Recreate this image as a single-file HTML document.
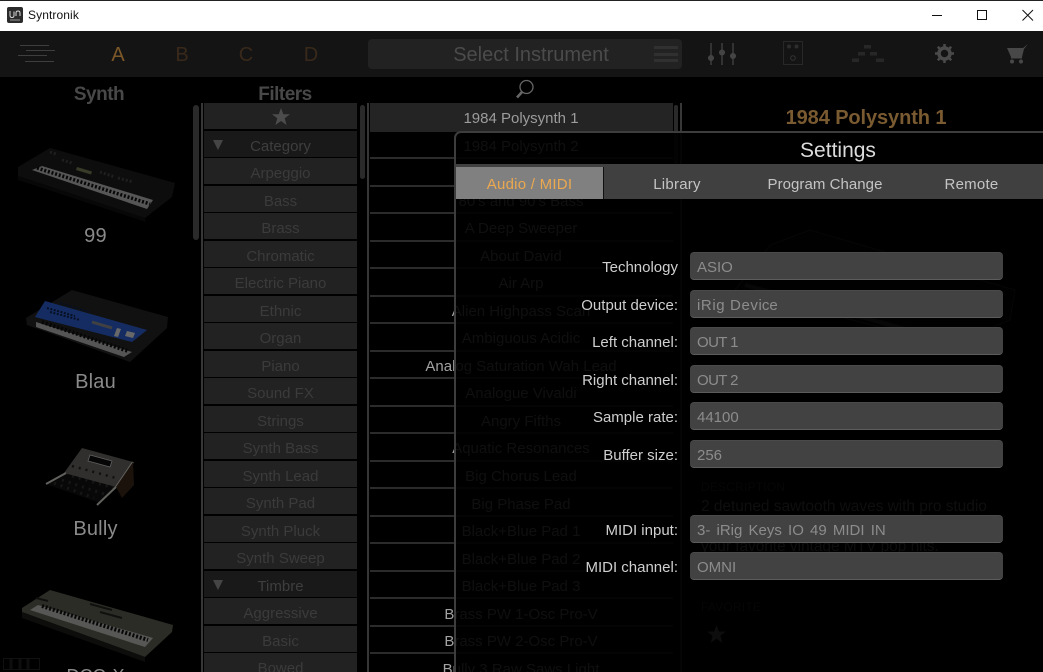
<!DOCTYPE html>
<html><head><meta charset="utf-8"><style>
html,body{margin:0;padding:0;background:#000;overflow:hidden;width:1043px;height:672px}
#r{position:relative;width:1043px;height:672px;overflow:hidden;background:#000;font-family:"Liberation Sans",sans-serif}
#r div,#r svg{position:absolute}
.t{text-align:center;white-space:nowrap}
.f{left:204px;width:153px;height:26px;line-height:31px;background:#222;color:#3b3b3b;font-size:15px;text-align:center}
.h{background:#191919;color:#3e3e3e}
.s{left:370px;width:303px;height:2px;background:#2b2b2b}
.l{left:371px;width:300px;height:26px;line-height:30px;text-align:center;color:#a2a2a2;font-size:15px;white-space:nowrap}
.lb{left:500px;width:178px;text-align:right;color:#cfcfcf;font-size:15px;line-height:24px}
.v{left:690px;width:313px;height:28px;box-sizing:border-box;background:#424242;border-radius:4px;border-bottom:1px solid #5c5c5c;border-top:1px solid #4a4a4a;color:#8c8c8c;font-size:15px;line-height:29px;padding-left:7px;white-space:nowrap}
.tab{top:164px;height:35px;line-height:41px;text-align:center;font-size:15px;letter-spacing:.25px;color:#c4c4c4}
.d{left:701px;color:#9a9a9a;white-space:nowrap}
.n{left:0;width:191px;text-align:center;color:#8a8a8a;font-size:20px;letter-spacing:.2px;line-height:24px}
</style></head><body><div id="r">

<div style="left:0;top:0;width:1043px;height:31px;background:#fff"></div>
<div style="left:0;top:0;width:1043px;height:1px;background:#222"></div>
<svg style="left:7px;top:7px" width="16" height="16" viewBox="0 0 16 16"><rect width="16" height="16" rx="2" fill="#2b2b2b"/><path d="M3 4v4.500q0 2 2 2t2-2V4.500M9 9V6q0-2 2-2t2 2v3" fill="none" stroke="#d8d8d8" stroke-width="1"/><rect x="3" y="12.500" width="10" height="1" fill="#999"/></svg>
<div style="left:28px;top:8px;font-size:12px;line-height:15px;color:#111;letter-spacing:.1px">Syntronik</div>
<svg style="left:925px;top:5px" width="115" height="20" viewBox="0 0 115 20" fill="none" stroke="#111"><path d="M7 10.500h10"/><rect x="52.500" y="5.500" width="9" height="9"/><path d="M97.500 5l10.500 10.500M108 5L97.500 15.500"/></svg>

<div style="left:0;top:31px;width:1043px;height:46px;background:#141414"></div>
<svg style="left:15px;top:40px" width="44" height="26" viewBox="0 0 44 26" stroke="#3e3e3e" stroke-width="1"><path d="M5 5.500h29M11 10.500h29M3 15.500h29M10 21.500h29"/></svg>
<div class="t" style="left:98px;top:44px;width:40px;font-size:20px;line-height:23px;color:#7c5728">A</div>
<div class="t" style="left:162px;top:44px;width:40px;font-size:20px;line-height:23px;color:#38291a">B</div>
<div class="t" style="left:226px;top:44px;width:40px;font-size:20px;line-height:23px;color:#38291a">C</div>
<div class="t" style="left:291px;top:44px;width:40px;font-size:20px;line-height:23px;color:#38291a">D</div>
<div style="left:368px;top:39px;width:314px;height:30px;background:#222;border-radius:4px"></div>
<div class="t" style="left:368px;top:43px;width:326px;font-size:20px;line-height:25px;color:#4b4b4b">Select Instrument</div>
<svg style="left:653px;top:45px" width="26" height="18" fill="#303030"><rect x="1" y="1" width="24" height="3"/><rect x="1" y="8" width="24" height="3"/><rect x="1" y="14" width="24" height="3"/></svg>

<svg style="left:705px;top:40px" width="35" height="27" viewBox="0 0 35 27" stroke="#444" stroke-width="1.300" fill="#444"><path d="M6 3v22M17 3v22M28 3v22"/><circle cx="6" cy="18" r="2.400"/><circle cx="17" cy="12.500" r="2.400"/><circle cx="28" cy="16" r="2.400"/></svg>
<svg style="left:782px;top:40px" width="24" height="27" viewBox="0 0 24 27"><rect x="1.500" y="1.500" width="19" height="23" fill="none" stroke="#282828" stroke-width="1"/><circle cx="7" cy="6.500" r="2" fill="#2d2d2d"/><circle cx="14.500" cy="6.500" r="2" fill="#2d2d2d"/><circle cx="11" cy="18" r="2.300" fill="none" stroke="#333"/></svg>
<svg style="left:850px;top:44px" width="36" height="20" fill="#272727"><rect x="14" y="1" width="7" height="3.500"/><rect x="8" y="8" width="7" height="3.500"/><rect x="20" y="8" width="7" height="3.500"/><rect x="2" y="14.500" width="7" height="3.500"/><rect x="26" y="14.500" width="8" height="3.500"/></svg>
<svg style="left:934px;top:43px" width="21" height="21" viewBox="0 0 21 21"><circle cx="10.500" cy="10.500" r="5.500" fill="none" stroke="#4a4a4a" stroke-width="3.500"/><path d="M10.500 1v3M10.500 17v3M1 10.500h3M17 10.500h3M3.800 3.800l2.200 2.200M15 15l2.200 2.200M3.800 17.200L6 15M15 6l2.200-2.200" stroke="#4a4a4a" stroke-width="2.500"/></svg>
<svg style="left:1006px;top:43px" width="24" height="22" viewBox="0 0 24 22"><path d="M1 5h15l1 0 5-4-4 5-2 8H5z" fill="#484848"/><rect x="5" y="14" width="11" height="1.500" fill="#484848"/><circle cx="6" cy="18.500" r="2" fill="#484848"/><circle cx="15" cy="18.500" r="2" fill="#484848"/></svg>

<div class="t" style="left:60px;top:83px;width:78px;font-size:19px;letter-spacing:-.5px;font-weight:bold;line-height:23px;color:#484848">Synth</div>
<div class="t" style="left:245px;top:83px;width:80px;font-size:19px;letter-spacing:-.5px;font-weight:bold;line-height:23px;color:#484848">Filters</div>
<svg style="left:514px;top:78px" width="24" height="23" viewBox="0 0 24 23"><circle cx="12.500" cy="9" r="6.500" fill="none" stroke="#666" stroke-width="1.300"/><path d="M8 14l-5 5.500" stroke="#666" stroke-width="2.600"/></svg>
<div class="t" style="left:726px;top:106px;width:280px;font-size:20px;font-weight:bold;line-height:24px;color:#7a5a30;letter-spacing:-.1px">1984 Polysynth 1</div>

<svg style="left:0;top:130px;opacity:.62" width="191" height="540" viewBox="0 130 191 540">
<path d="M18 167L50 148 175 183 172 197 145 218 18 176z" fill="#161616"/>
<path d="M18 176L145 218 146 222 18 180z" fill="#0c0c0c"/>
<path d="M32 170L42 166 153 200 147 209z" fill="#8b8b8b"/>
<path d="M37 168L150 204" stroke="#0c0c0c" stroke-width="3.500" stroke-dasharray="2 1.800" fill="none"/>
<path d="M77 167l15 4.500-1 3-15-4.500z" fill="#5a6040"/>
<path d="M50 152l6 2M62 160l10 3M100 172l15 5M118 178l15 4" stroke="#333" stroke-width="3" stroke-dasharray="2 2"/>

<path d="M72 290L168 317 167 328 130 362 27 325 26 318z" fill="#1c1c1c"/>
<path d="M45 301L147 330 132 342 35 317z" fill="#2348a0"/>
<path d="M47 308l28 8M50 312l30 8M60 303l30 9" stroke="#0b1a36" stroke-width="2" stroke-dasharray="2 1.500"/>
<path d="M92 322l20 6" stroke="#6a6a6a" stroke-width="3"/>
<path d="M117 328l4 1-3 8-4-1zM127 331l8 2-2 5-8-2z" fill="#a8a8a8"/>
<path d="M36 322L132 352 124 357 36 327 36 322z" fill="#898989"/>
<path d="M42 322L128 351" stroke="#0b0b0b" stroke-width="4" stroke-dasharray="2 2" fill="none"/>

<path d="M64 473L116 487 100 503 46 484z" fill="#0d0d0d"/>
<path d="M72 476l42 12M62 480l42 14M54 483l40 15" stroke="#262626" stroke-width="3" stroke-dasharray="2 5"/>
<path d="M82 448L133 462 116 487 64 473z" fill="#4e4d49"/>
<path d="M90 455l22 6-2 6-22-6z" fill="#0b0b0b" stroke="#9a9a9a" stroke-width=".8"/>
<path d="M72 466l44 12" stroke="#1a1a1a" stroke-width="2.500" stroke-dasharray="2 5"/>
<path d="M66 473L46 484M133 462L116 487 97 505" stroke="#9d9d98" stroke-width="2" fill="none"/>
<path d="M133 462l1 23-12 13-6-11z" fill="#2c1e14"/>

<path d="M50 590L173 625 172 632 145 657 22 612 22 608z" fill="#48483f"/>
<path d="M22 612L145 657 145 662 22 618z" fill="#151514"/>
<path d="M38 605L153 638 145 647 30 610z" fill="#8d8d8a"/>
<path d="M42 606L148 640" stroke="#0c0c0c" stroke-width="4" stroke-dasharray="2 1.800" fill="none"/>
<path d="M90 604l22 6M100 612l22 6M36 598l12 3" stroke="#1a1a18" stroke-width="2"/>
<rect x="3.500" y="658.500" width="36" height="11" fill="none" stroke="#1a1a1a"/>
<path d="M11 659v10M20 659v10M28 659v10" stroke="#181818" stroke-width="3"/>
</svg>
<div class="n" style="top:224px">99</div>
<div class="n" style="top:370px">Blau</div>
<div class="n" style="top:517px">Bully</div>
<div class="n" style="top:664px;height:8px;overflow:hidden;font-size:18px;letter-spacing:0">DCO-X</div>

<div style="left:193px;top:105px;width:6px;height:135px;background:#2a2a2a;border-radius:3px"></div>
<div style="left:201px;top:103px;width:2px;height:569px;background:#373737"></div>
<div style="left:360px;top:105px;width:5px;height:74px;background:#2a2a2a;border-radius:3px"></div>
<div style="left:367px;top:103px;width:2px;height:569px;background:#373737"></div>
<div style="left:674px;top:105px;width:4px;height:74px;background:#2a2a2a;border-radius:2px"></div>
<div style="left:680px;top:103px;width:2px;height:569px;background:#373737"></div>

<div class="f" style="top:103px;height:26px"></div>
<svg style="left:272px;top:108px" width="18" height="18" viewBox="0 0 18 18"><path d="M9 0l2.300 6.200H18l-5.300 4 1.900 6.800L9 13l-5.600 4 1.900-6.800L0 6.200h6.700z" fill="#4c4c4c"/></svg>
<div class="f h" style="top:131px">Category</div>
<svg style="left:212px;top:139px" width="12" height="12"><path d="M1 1h10L6 11z" fill="#454545"/></svg>
<div class="f" style="top:158px">Arpeggio</div>
<div class="f" style="top:186px">Bass</div>
<div class="f" style="top:213px">Brass</div>
<div class="f" style="top:241px">Chromatic</div>
<div class="f" style="top:268px">Electric Piano</div>
<div class="f" style="top:296px">Ethnic</div>
<div class="f" style="top:323px">Organ</div>
<div class="f" style="top:351px">Piano</div>
<div class="f" style="top:378px">Sound FX</div>
<div class="f" style="top:406px">Strings</div>
<div class="f" style="top:433px">Synth Bass</div>
<div class="f" style="top:461px">Synth Lead</div>
<div class="f" style="top:488px">Synth Pad</div>
<div class="f" style="top:516px">Synth Pluck</div>
<div class="f" style="top:543px">Synth Sweep</div>
<div class="f h" style="top:571px">Timbre</div>
<svg style="left:212px;top:579px" width="12" height="12"><path d="M1 1h10L6 11z" fill="#454545"/></svg>
<div class="f" style="top:598px">Aggressive</div>
<div class="f" style="top:626px">Basic</div>
<div class="f" style="top:653px;height:19px;overflow:hidden">Bowed</div>

<div style="left:370px;top:103px;width:303px;height:29px;background:#242424"></div>
<div class="s" style="top:157px"></div><div class="s" style="top:185px"></div><div class="s" style="top:212px"></div><div class="s" style="top:240px"></div><div class="s" style="top:267px"></div><div class="s" style="top:295px"></div><div class="s" style="top:322px"></div><div class="s" style="top:350px"></div><div class="s" style="top:377px"></div><div class="s" style="top:405px"></div><div class="s" style="top:432px"></div><div class="s" style="top:460px"></div><div class="s" style="top:487px"></div><div class="s" style="top:515px"></div><div class="s" style="top:542px"></div><div class="s" style="top:570px"></div><div class="s" style="top:597px"></div><div class="s" style="top:625px"></div><div class="s" style="top:652px"></div>

<div class="l" style="top:104px;color:#9c9c9c">1984 Polysynth 1</div>
<div class="l" style="top:132px">1984 Polysynth 2</div>
<div class="l" style="top:187px">80's and 90's Bass</div>
<div class="l" style="top:214px">A Deep Sweeper</div>
<div class="l" style="top:242px">About David</div>
<div class="l" style="top:269px">Air Arp</div>
<div class="l" style="top:297px">Alien Highpass Scan</div>
<div class="l" style="top:324px">Ambiguous Acidic</div>
<div class="l" style="top:352px">Analog Saturation Wah Lead</div>
<div class="l" style="top:379px">Analogue Vivaldi</div>
<div class="l" style="top:407px">Angry Fifths</div>
<div class="l" style="top:434px">Aquatic Resonances</div>
<div class="l" style="top:462px">Big Chorus Lead</div>
<div class="l" style="top:490px">Big Phase Pad</div>
<div class="l" style="top:517px">Black+Blue Pad 1</div>
<div class="l" style="top:545px">Black+Blue Pad 2</div>
<div class="l" style="top:572px">Black+Blue Pad 3</div>
<div class="l" style="top:600px">Brass PW 1-Osc Pro-V</div>
<div class="l" style="top:627px">Brass PW 2-Osc Pro-V</div>
<div class="l" style="top:655px;height:17px;overflow:hidden">Bully 3 Raw Saws Light</div>

<svg style="left:690px;top:220px" width="340" height="130" viewBox="690 220 340 130" fill="none"><path d="M770 245L810 230 1015 290 1010 320 950 345 735 290z" fill="#141414" stroke="#444"/><path d="M745 285L945 340" stroke="#555" stroke-width="4"/></svg>
<div class="d" style="top:480px;font-size:12px;letter-spacing:.2px;color:#444">DESCRIPTION</div>
<div class="d" style="top:498px;font-size:15.500px;letter-spacing:-.05px">2 detuned sawtooth waves with pro studio</div>
<div class="d" style="top:538px;font-size:15.500px;letter-spacing:-.05px">your favorite vintage MTV pop hits.</div>
<div class="d" style="top:600px;font-size:12px;letter-spacing:.2px;color:#444">FAVORITE</div>
<svg style="left:707px;top:625px" width="19" height="19" viewBox="0 0 18 18"><path d="M9 0l2.300 6.200H18l-5.300 4 1.900 6.800L9 13l-5.600 4 1.900-6.800L0 6.200h6.700z" fill="#909090"/></svg>

<div style="left:454px;top:131px;width:589px;height:541px;box-sizing:border-box;border:2px solid #3d3d3d;border-right:0;border-bottom:0;border-radius:7px 0 0 0;background:rgba(0,0,0,.91)"></div>
<div class="t" style="left:760px;top:139px;width:156px;font-size:21px;line-height:24px;color:#dcdcdc">Settings</div>
<div style="left:456px;top:164px;width:587px;height:35px;background:#404040"></div>
<div class="tab" style="left:456px;width:147px;top:167px;height:32px;line-height:36px;background:#808080;color:#eba84f">Audio / MIDI</div>
<div style="left:603px;top:167px;width:1px;height:32px;background:#111"></div>
<div class="tab" style="left:604px;width:146px">Library</div>
<div class="tab" style="left:750px;width:150px;letter-spacing:.05px">Program Change</div>
<div class="tab" style="left:900px;width:143px">Remote</div>

<div class="lb" style="top:256px">Technology</div><div class="v" style="top:252px">ASIO</div>
<div class="lb" style="top:294px">Output device:</div><div class="v" style="top:290px"><span style="letter-spacing:.6px">iRig Dev</span>ice</div>
<div class="lb" style="top:331px">Left channel:</div><div class="v" style="top:327px;letter-spacing:-.6px">OUT 1</div>
<div class="lb" style="top:369px">Right channel:</div><div class="v" style="top:365px;letter-spacing:-.6px">OUT 2</div>
<div class="lb" style="top:406px">Sample rate:</div><div class="v" style="top:402px">44100</div>
<div class="lb" style="top:444px">Buffer size:</div><div class="v" style="top:440px">256</div>
<div class="lb" style="top:519px">MIDI input:</div><div class="v" style="top:515px;word-spacing:2px">3- iRig Keys IO 49 MIDI IN</div>
<div class="lb" style="top:556px">MIDI channel:</div><div class="v" style="top:552px">OMNI</div>
</div></body></html>
